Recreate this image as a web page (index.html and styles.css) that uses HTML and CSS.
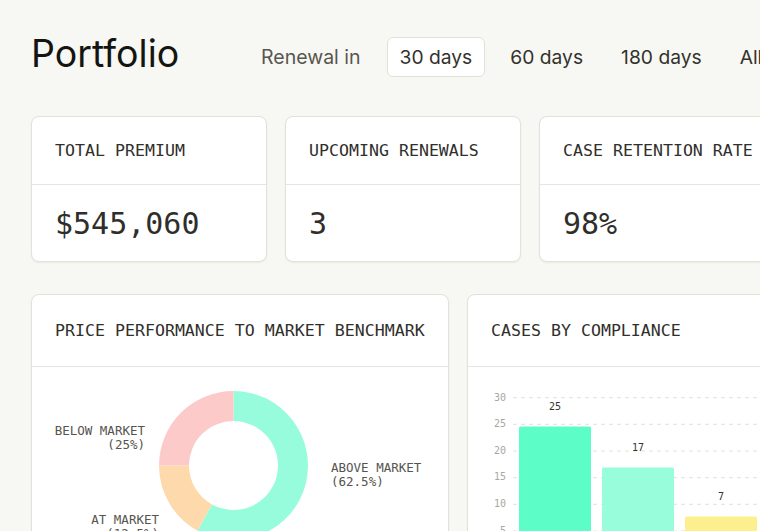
FILE: index.html
```html
<!DOCTYPE html>
<html lang="en">
<head>
    <meta charset="UTF-8">
    <meta name="viewport" content="width=device-width, initial-scale=1.0">
    <title>Portfolio</title>
    <link rel="stylesheet" href="styles.css">
</head>
<body>
    <div class="page">
        <header class="top">
            <h1>Portfolio</h1>
            <div class="range">
                <span class="range-label">Renewal in</span>
                <button class="range-btn active">30 days</button>
                <button class="range-btn">60 days</button>
                <button class="range-btn">180 days</button>
                <button class="range-btn">All</button>
            </div>
        </header>

        <section class="stats">
            <div class="card stat">
                <div class="card-head">Total premium</div>
                <div class="stat-value">$545,060</div>
            </div>
            <div class="card stat">
                <div class="card-head">Upcoming renewals</div>
                <div class="stat-value">3</div>
            </div>
            <div class="card stat">
                <div class="card-head">Case retention rate</div>
                <div class="stat-value">98%</div>
            </div>
            <div class="card stat">
                <div class="card-head">Open cases</div>
                <div class="stat-value">12</div>
            </div>
        </section>

        <section class="charts">
            <div class="card chart">
                <div class="card-head chart-head">Price performance to market benchmark</div>
                <div class="chart-body">
                    <svg class="donut" width="416" height="220" viewBox="0 0 416 220">
                        <path fill="#96fcdb" d="M201.5,24 A74.5,74.5 0 1 1 165.38,163.66 L179.93,137.42 A44.5,44.5 0 1 0 201.5,54 Z"/>
                        <path fill="#fdd9ab" d="M165.38,163.66 A74.5,74.5 0 0 1 127,98.5 L157,98.5 A44.5,44.5 0 0 0 179.93,137.42 Z"/>
                        <path fill="#fdcaca" d="M127,98.5 A74.5,74.5 0 0 1 201.5,24 L201.5,54 A44.5,44.5 0 0 0 157,98.5 Z"/>
                        <g class="donut-label">
                            <text x="113" y="68" text-anchor="end">BELOW MARKET</text>
                            <text x="113" y="82" text-anchor="end">(25%)</text>
                            <text x="299" y="105">ABOVE MARKET</text>
                            <text x="299" y="119">(62.5%)</text>
                            <text x="127" y="157" text-anchor="end">AT MARKET</text>
                            <text x="127" y="171" text-anchor="end">(12.5%)</text>
                        </g>
                    </svg>
                </div>
            </div>
            <div class="card chart">
                <div class="card-head chart-head">Cases by compliance</div>
                <div class="chart-body">
                    <svg class="bars" width="416" height="220" viewBox="0 0 416 220">
                        <g class="grid">
                            <line x1="45" x2="416" y1="30.7" y2="30.7"/>
                            <line x1="45" x2="416" y1="57.3" y2="57.3"/>
                            <line x1="45" x2="416" y1="84" y2="84"/>
                            <line x1="45" x2="416" y1="110.7" y2="110.7"/>
                            <line x1="45" x2="416" y1="137.3" y2="137.3"/>
                            <line x1="45" x2="416" y1="164" y2="164"/>
                        </g>
                        <g class="axis">
                            <text x="38" y="33.5">30</text>
                            <text x="38" y="60">25</text>
                            <text x="38" y="86.7">20</text>
                            <text x="38" y="113.4">15</text>
                            <text x="38" y="140">10</text>
                            <text x="38" y="166.7">5</text>
                        </g>
                        <rect x="51" y="59.5" width="72" height="140" rx="1.5" fill="#5dfdc7"/>
                        <rect x="134" y="100.5" width="72" height="100" rx="1.5" fill="#97fdda"/>
                        <rect x="217" y="149.5" width="72" height="60" rx="1.5" fill="#fdef8d"/>
                        <g class="bar-value">
                            <text x="87" y="43">25</text>
                            <text x="170" y="84">17</text>
                            <text x="253" y="133">7</text>
                        </g>
                    </svg>
                </div>
            </div>
        </section>
    </div>
</body>
</html>
```

FILE: styles.css
```css
body {
    margin: 0;
    background: #f7f7f3;
    font-family: Inter, "Noto Sans", sans-serif;
    color: #1a1a17;
    overflow: hidden;
}

.page {
    width: 1040px;
    padding: 37px 31px 0;
}

/* header */

.top {
    display: flex;
    align-items: center;
    height: 40px;
}

.top h1 {
    width: 230px;
    margin: 0 0 6px;
    font-size: 37.5px;
    font-weight: 400;
    line-height: 40px;
    color: #141411;
}

.range {
    display: flex;
    align-items: center;
    gap: 12px;
}

.range-label {
    font-size: 19.5px;
    color: #57564f;
    margin-right: 14px;
}

.range-btn {
    height: 40px;
    padding: 0 12px;
    border: 1px solid transparent;
    border-radius: 6px;
    background: none;
    font-family: Inter, "Noto Sans", sans-serif;
    font-size: 19.25px;
    color: #33322d;
}

.range-btn.active {
    background: #fff;
    border-color: #e4e1d9;
}

/* cards */

.card {
    background: #fff;
    border: 1px solid #e4e1d9;
    border-radius: 8px;
    box-shadow: 0 1px 2px rgba(60, 50, 20, 0.06);
    overflow: hidden;
}

.card-head {
    display: flex;
    align-items: center;
    height: 67px;
    padding: 0 23px;
    border-bottom: 1px solid #e8e5de;
    font-family: "DejaVu Sans Mono", monospace;
    font-size: 16.6px;
    text-transform: uppercase;
    color: #302f2b;
    white-space: nowrap;
}

.stats {
    display: grid;
    grid-template-columns: repeat(4, 236px);
    gap: 18px;
    margin-top: 39px;
}

.stat-value {
    display: flex;
    align-items: center;
    height: 76px;
    padding: 0 23px;
    font-family: "DejaVu Sans Mono", monospace;
    font-size: 30px;
    color: #2f2e2a;
}

.charts {
    display: grid;
    grid-template-columns: repeat(2, 418px);
    gap: 18px;
    margin-top: 32px;
}

.chart-head {
    height: 71px;
}

.chart-body svg {
    display: block;
}

.donut-label text {
    font-family: "DejaVu Sans Mono", monospace;
    font-size: 12.5px;
    fill: #55544e;
}

.grid line {
    stroke: #e3e1db;
    stroke-width: 1;
    stroke-dasharray: 4 4;
}

.axis text {
    font-family: "DejaVu Sans Mono", monospace;
    font-size: 10px;
    fill: #a9a7a0;
    text-anchor: end;
}

.bar-value text {
    font-family: "DejaVu Sans Mono", monospace;
    font-size: 10px;
    fill: #34332f;
    text-anchor: middle;
}
```
